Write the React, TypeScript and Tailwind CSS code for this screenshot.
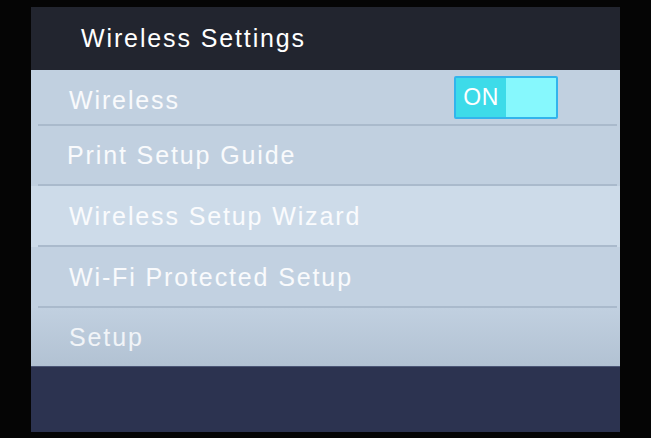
import React from "react";

const rows = [
  { label: "Wireless", h: "h-[56px]", bg: "bg-[#c1d0e0]", toggle: true, pt: "pt-[6px]", pl: "pl-[38px]" },
  { label: "Print Setup Guide", h: "h-[60px]", bg: "bg-[#c1d0e0]", pt: "pt-[0px]", pl: "pl-[36px]" },
  { label: "Wireless Setup Wizard", h: "h-[61px]", bg: "bg-[#cddbe9]", pt: "pt-[2px]", pl: "pl-[38px]" },
  { label: "Wi-Fi Protected Setup", h: "h-[61px]", bg: "bg-[#c2d1e1]", pt: "pt-[1px]", pl: "pl-[38px]" },
];

export default function App() {
  return (
    <div className="w-[651px] h-[438px] bg-[#050505] pt-[7px] pl-[31px] overflow-hidden" style={{ fontFamily: '"Liberation Sans", Arial, sans-serif' }}>
      <div className="w-[589px] h-[425px] flex flex-col">
        <div className="h-[63px] bg-[#22252f] flex items-center pl-[50px] pb-[1px]">
          <span className="text-white text-[25px] tracking-[0.075em] leading-none">Wireless Settings</span>
        </div>
        {rows.map((r, i) => (
          <div key={i} className={`${r.h} ${r.bg} flex flex-col`}>
            <div className={`flex-1 flex items-center ${r.pl} pr-[62px] justify-between ${r.pt}`}>
              <span className="text-white/90 text-[25px] tracking-[0.075em] leading-none">{r.label}</span>
              {r.toggle && (
                <div className="w-[104px] h-[43px] -mt-[6px] border-2 border-[#33b4ec] rounded-[2px] flex overflow-hidden">
                  <div className="w-[50px] bg-[#3ddbe9] flex items-center justify-center">
                    <span className="text-white text-[23px] leading-none tracking-[0.02em]">ON</span>
                  </div>
                  <div className="flex-1 bg-[#86f8fd]" />
                </div>
              )}
            </div>
            <div className="h-[2px] ml-[7px] mr-[3px] bg-[#aabacc]" />
          </div>
        ))}
        <div className="h-[58px] bg-gradient-to-b from-[#c1d0e0] to-[#b2c2d3] flex items-center pl-[38px]">
          <span className="text-white/80 text-[25px] tracking-[0.075em] leading-none">Setup</span>
        </div>
        <div className="flex-1 bg-[#2c3350] border-t border-[#4a5575]" />
      </div>
    </div>
  );
}
